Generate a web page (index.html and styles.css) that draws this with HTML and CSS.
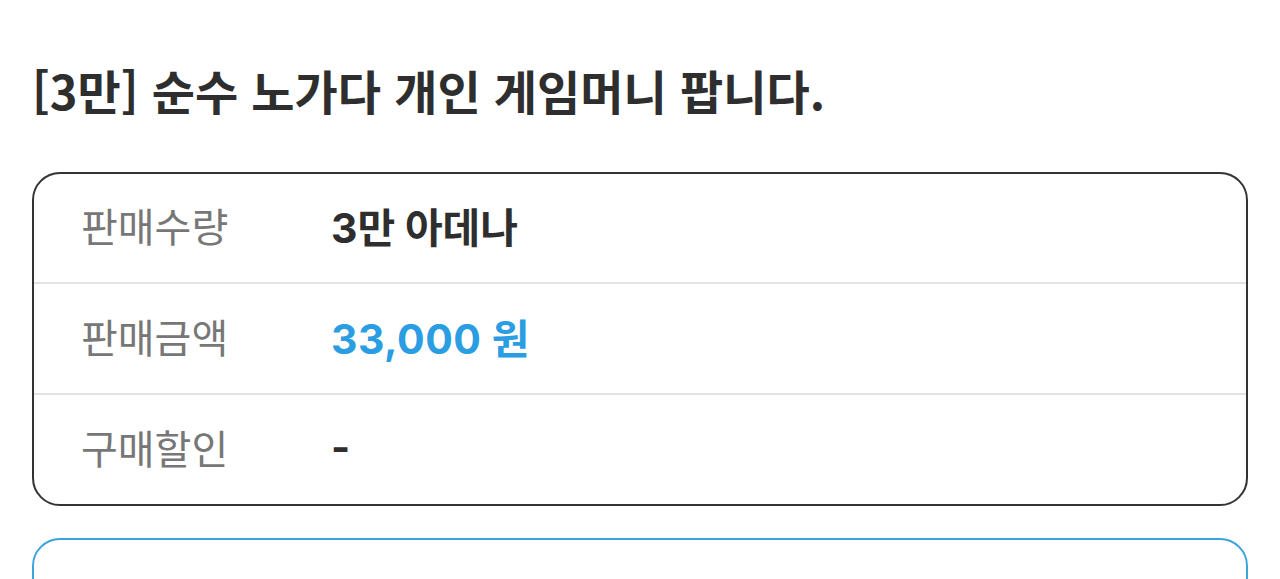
FILE: index.html
```html
<!DOCTYPE html>
<html lang="ko">
<head>
<meta charset="utf-8">
<title>상품 상세</title>
<link rel="stylesheet" href="styles.css">
</head>
<body>
<main class="page">
  <h1 class="title">[3만] 순수 노가다 개인 게임머니 팝니다.</h1>
  <section class="info-card">
    <div class="info-row">
      <span class="info-label">판매수량</span>
      <span class="info-value">3만 아데나</span>
    </div>
    <div class="info-row">
      <span class="info-label">판매금액</span>
      <span class="info-value price">33,000 원</span>
    </div>
    <div class="info-row">
      <span class="info-label">구매할인</span>
      <span class="info-value">-</span>
    </div>
  </section>
  <section class="notice-card"></section>
</main>
</body>
</html>
```
FILE: styles.css
```css
html, body {
  margin: 0;
  padding: 0;
  background: #ffffff;
}

body {
  font-family: "Noto Sans CJK KR", "Noto Sans", sans-serif;
  color: #333333;
}

.page {
  padding: 0 32px;
}

.title {
  margin: 0;
  padding-top: 60px;
  font-size: 47px;
  font-weight: 700;
  line-height: 60px;
  color: #2e2e2e;
}

.info-card {
  margin-top: 52px;
  border: 2px solid #333333;
  border-radius: 28px;
  display: flex;
  flex-direction: column;
}

.info-row {
  display: flex;
  align-items: center;
  height: 108px;
  box-sizing: border-box;
  padding: 0 0 6px 47px;
}

.info-row + .info-row {
  height: 111px;
  border-top: 2px solid #e3e3e3;
}

.info-label {
  width: 250px;
  font-size: 40px;
  color: #777777;
}

.info-value {
  font-family: "Inter", "Noto Sans CJK KR", sans-serif;
  font-size: 41px;
  font-weight: 700;
  color: #2e2e2e;
}

.info-value.price {
  color: #2a9de3;
  letter-spacing: 0.5px;
}

.notice-card {
  margin-top: 32px;
  height: 120px;
  border: 2px solid #3da3db;
  border-radius: 28px;
}
```
